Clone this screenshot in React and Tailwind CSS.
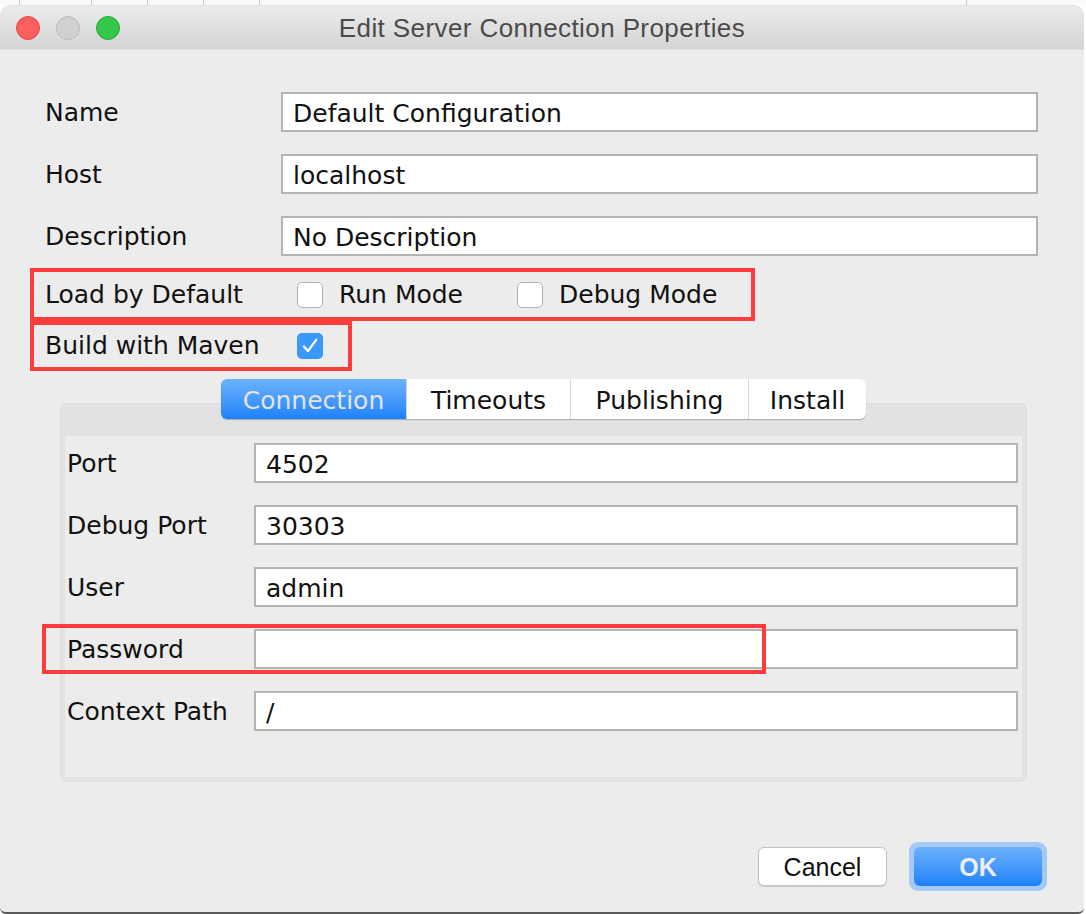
import React from 'react'

const labelFont = { fontFamily: '"DejaVu Sans", sans-serif' }

function TextField({ value = '' }) {
  return (
    <div className="flex-1 h-[40px] bg-white border-2 border-[#b4b4b4] flex items-center pl-[10px] pt-[3px] text-[25px] text-[#111]">
      {value}
    </div>
  )
}

function Checkbox({ checked }) {
  if (checked) {
    return (
      <div className="w-[26px] h-[26px] rounded-[5px] bg-[#3b98fb] flex items-center justify-center">
        <svg width="18" height="18" viewBox="0 0 16 16" fill="none">
          <path d="M2.5 8.5 L6.2 12.5 L13.5 2.5" stroke="white" strokeWidth="2" strokeLinecap="round" strokeLinejoin="round" />
        </svg>
      </div>
    )
  }
  return <div className="w-[26px] h-[26px] rounded-[5px] bg-white border border-[#b3b3b3]" />
}

export default function App() {
  const topFields = [
    { label: 'Name', value: 'Default Configuration' },
    { label: 'Host', value: 'localhost' },
    { label: 'Description', value: 'No Description' },
  ]
  const tabFields = [
    { label: 'Port', value: '4502' },
    { label: 'Debug Port', value: '30303' },
    { label: 'User', value: 'admin' },
    { label: 'Password', value: '', marked: true },
    { label: 'Context Path', value: '/' },
  ]
  const tabs = ['Connection', 'Timeouts', 'Publishing', 'Install']
  const tabWidths = ['w-[185px]', 'w-[164px]', 'w-[178px]', 'w-[118px]']

  return (
    <div className="w-[1086px] h-[914px] bg-white flex flex-col overflow-hidden" style={labelFont}>
      {/* background table behind the window */}
      <div className="h-[5px] flex shrink-0 bg-[#fafafa]">
        <div className="w-[20px] border-r border-[#c8c8c8]" />
        <div className="w-[72px] border-r border-[#c8c8c8]" />
        <div className="w-[56px] border-r border-[#c8c8c8]" />
        <div className="w-[56px] border-r border-[#c8c8c8]" />
        <div className="w-[56px] border-r border-[#c8c8c8]" />
        <div className="w-[707px] border-r border-[#c8c8c8]" />
      </div>

      <div className="flex-1 flex flex-col w-[1084px] bg-[#ececec] rounded-t-[10px] rounded-b-[6px] overflow-hidden border-b-2 border-[#5a5a5a]">
        {/* title bar */}
        <div className="h-[45px] shrink-0 bg-gradient-to-b from-[#ececec] to-[#d4d4d4] border-b border-[#b3b3b3] flex items-center relative rounded-t-[10px] border-t border-[#e0e0e0]">
          <div className="flex items-center gap-[16px] pl-[16px]">
            <div className="w-[24px] h-[24px] rounded-full bg-[#fc605c] border border-[#df4944]" />
            <div className="w-[24px] h-[24px] rounded-full bg-[#d0d0d0] border border-[#bababa]" />
            <div className="w-[24px] h-[24px] rounded-full bg-[#34c749] border border-[#28a93a]" />
          </div>
          <div className="absolute inset-0 flex items-center justify-center text-[26px] tracking-[0.4px] text-[#4b4b4b] pt-[2px]" style={{ fontFamily: '"Liberation Sans", Arial, sans-serif' }}>
            Edit Server Connection Properties
          </div>
        </div>

        <div className="flex flex-col pt-[42px] text-[#111] text-[25px]">
          {topFields.map((f) => (
            <div key={f.label} className="flex items-center h-[40px] mb-[22px] pl-[45px] pr-[46px]">
              <div className="w-[236px] pt-[1px]">{f.label}</div>
              <TextField value={f.value} />
            </div>
          ))}

          {/* Load by Default */}
          <div className="ml-[30px] w-[725px] h-[53px] border-4 border-[#ff3b3b] flex items-center pl-[11px] -mt-[10px]">
            <div className="w-[252px]">Load by Default</div>
            <Checkbox />
            <div className="ml-[16px] w-[178px]">Run Mode</div>
            <Checkbox />
            <div className="ml-[16px]">Debug Mode</div>
          </div>

          {/* Build with Maven */}
          <div className="ml-[30px] w-[322px] h-[50px] border-4 border-[#ff3b3b] flex items-center pl-[11px]">
            <div className="w-[252px]">Build with Maven</div>
            <Checkbox checked />
          </div>

          {/* tabbed panel */}
          <div className="flex flex-col mt-[8px] ml-[60px] w-[967px]">
            <div className="flex justify-center relative z-10">
              <div className="flex h-[40px] rounded-[6px] bg-white shadow-[0_1px_1px_rgba(0,0,0,0.25)] overflow-hidden">
                {tabs.map((t, i) => (
                  <div
                    key={t}
                    className={
                      i === 0
                        ? `${tabWidths[i]} flex items-center justify-center pt-[3px] bg-gradient-to-b from-[#6db3fb] to-[#1a81fb] text-[#e4e4e4]`
                        : `${tabWidths[i]} flex items-center justify-center pt-[3px] text-[#111] border-l border-[#d8d8d8]`
                    }
                  >
                    {t}
                  </div>
                ))}
              </div>
            </div>
            <div className="-mt-[16px] h-[379px] rounded-[7px] bg-[#e2e2e2] border border-[#dcdcdc] px-[4px] pt-[32px] pb-[4px] flex">
              <div className="flex-1 bg-[#ececec] flex flex-col pt-[7px] pl-[2px] pr-[4px]">
                {tabFields.map((f) => (
                  <div key={f.label} className="relative flex items-center h-[40px] mb-[22px]">
                    {f.marked && (
                      <div className="absolute -left-[25px] -top-[5px] w-[724px] h-[50px] border-4 border-[#ff3b3b]" />
                    )}
                    <div className="w-[187px] pt-[1px]">{f.label}</div>
                    <TextField value={f.value} />
                  </div>
                ))}
              </div>
            </div>
          </div>

          {/* buttons */}
          <div className="flex justify-end items-center mt-[60px] pr-[37px] gap-[22px]" style={{ fontFamily: '"Liberation Sans", Arial, sans-serif' }}>
            <div className="w-[129px] h-[39px] bg-white border border-[#c3c3c3] rounded-[6px] shadow-[0_1px_1px_rgba(0,0,0,0.15)] flex items-center justify-center pt-[2px] text-[25px] text-[#111]">
              Cancel
            </div>
            <div className="p-[5px] rounded-[9px] bg-[#a3c9f4]">
              <div className="w-[128px] h-[39px] rounded-[6px] bg-gradient-to-b from-[#6bb1fb] to-[#1a81fb] flex items-center justify-center pt-[2px] text-[25px] font-bold text-[#eeeeee]">
                OK
              </div>
            </div>
          </div>
        </div>
      </div>
    </div>
  )
}
